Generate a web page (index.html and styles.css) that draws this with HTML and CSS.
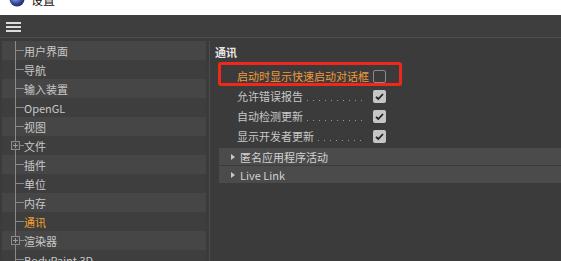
FILE: index.html
```html
<!DOCTYPE html>
<html lang="zh">

<head>
    <meta charset="UTF-8">
    <meta name="viewport" content="width=device-width, initial-scale=1.0">
    <title>设置</title>
    <link rel="stylesheet" href="styles.css">
</head>

<body>
    <div class="titlebar">
        <div class="title-inner">
            <svg class="app-icon" width="16" height="16" viewBox="0 0 16 16">
                <defs>
                    <radialGradient id="ball" cx="0.4" cy="0.35" r="0.7">
                        <stop offset="0" stop-color="#b8c8f0" />
                        <stop offset="0.6" stop-color="#3c50a8" />
                        <stop offset="1" stop-color="#1a2050" />
                    </radialGradient>
                </defs>
                <circle cx="8" cy="8" r="7.5" fill="url(#ball)" />
            </svg>
            <span class="title-text">设置</span>
        </div>
    </div>

    <div class="toolbar">
        <div class="menu-btn"><span></span><span></span><span></span></div>
    </div>

    <div class="main">
        <ul class="tree">
            <li class="tree-row"><span class="branch"></span>用户界面</li>
            <li class="tree-row"><span class="branch"></span>导航</li>
            <li class="tree-row"><span class="branch"></span>输入装置</li>
            <li class="tree-row"><span class="branch"></span>OpenGL</li>
            <li class="tree-row"><span class="branch"></span>视图</li>
            <li class="tree-row"><span class="branch"><span class="toggle"></span></span>文件</li>
            <li class="tree-row"><span class="branch"></span>插件</li>
            <li class="tree-row"><span class="branch"></span>单位</li>
            <li class="tree-row"><span class="branch"></span>内存</li>
            <li class="tree-row active"><span class="branch"></span>通讯</li>
            <li class="tree-row"><span class="branch"><span class="toggle"></span></span>渲染器</li>
            <li class="tree-row"><span class="branch"></span>BodyPaint 3D</li>
        </ul>

        <div class="content">
            <div class="group-title">通讯</div>

            <div class="options">
                <div class="highlight-box"></div>
                <div class="option orange">
                    <span class="label">启动时显示快速启动对话框</span>
                    <span class="check"></span>
                </div>
                <div class="option">
                    <span class="label">允许错误报告</span>
                    <span class="dots"></span>
                    <span class="check on"><svg width="13" height="13" viewBox="0 0 13 13"><path d="M3 6.8 L5.3 9 L10 4" fill="none" stroke="#222" stroke-width="1.8" /></svg></span>
                </div>
                <div class="option">
                    <span class="label">自动检测更新</span>
                    <span class="dots"></span>
                    <span class="check on"><svg width="13" height="13" viewBox="0 0 13 13"><path d="M3 6.8 L5.3 9 L10 4" fill="none" stroke="#222" stroke-width="1.8" /></svg></span>
                </div>
                <div class="option">
                    <span class="label">显示开发者更新</span>
                    <span class="dots"></span>
                    <span class="check on"><svg width="13" height="13" viewBox="0 0 13 13"><path d="M3 6.8 L5.3 9 L10 4" fill="none" stroke="#222" stroke-width="1.8" /></svg></span>
                </div>
            </div>

            <div class="section"><span class="arrow"></span>匿名应用程序活动</div>
            <div class="section"><span class="arrow"></span>Live Link</div>
        </div>
    </div>
</body>

</html>
```

FILE: styles.css
```css
body {
    margin: 0;
    width: 561px;
    height: 261px;
    overflow: hidden;
    background-color: #3b3b3b;
    font-family: "Noto Sans CJK SC", "Noto Sans", sans-serif;
    font-size: 11px;
    color: #c8c8c8;
}

.titlebar {
    height: 15px;
    background-color: #ffffff;
    overflow: hidden;
}

.title-inner {
    display: flex;
    align-items: center;
    height: 20px;
    margin-top: -11px;
    padding-left: 9px;
}

.title-text {
    margin-left: 6px;
    font-size: 12px;
    color: #111;
}

.toolbar {
    height: 22px;
    background-color: #3e3e3e;
    border-bottom: 1px solid #4c4c4c;
    display: flex;
    align-items: center;
    padding-left: 6px;
}

.menu-btn {
    display: flex;
    flex-direction: column;
    gap: 2px;
    margin-top: 1px;
}

.menu-btn span {
    display: block;
    width: 15px;
    height: 2px;
    background-color: #dcdcdc;
}

.main {
    display: flex;
    padding-top: 3px;
    height: 220px;
}

/* left tree */
.tree {
    list-style: none;
    margin: 0 0 0 2px;
    padding: 0;
    width: 204px;
    flex-shrink: 0;
    border-right: 3px solid #3b3b3b;
    box-shadow: 1px 0 0 #4c4c4c;
}

.tree-row {
    display: flex;
    align-items: center;
    height: 19px;
    background-color: #3e3e3e;
    white-space: nowrap;
}

.tree-row:nth-child(odd) {
    background-color: #464646;
}

.tree-row.active {
    color: #f0a030;
}

.branch {
    width: 22px;
    height: 19px;
    flex-shrink: 0;
    display: flex;
    align-items: center;
    background:
        linear-gradient(#8a8a8a, #8a8a8a) 13px 0 / 1px 100% no-repeat,
        linear-gradient(#8a8a8a, #8a8a8a) 13px 9px / 9px 1px no-repeat;
}

.toggle {
    width: 7px;
    height: 7px;
    margin-left: 9px;
    border: 1px solid #8a8a8a;
    background:
        linear-gradient(#9a9a9a, #9a9a9a) 1px 3px / 5px 1px no-repeat,
        linear-gradient(#9a9a9a, #9a9a9a) 3px 1px / 1px 5px no-repeat,
        #464646;
}

/* right panel */
.content {
    flex: 1;
    padding-left: 6px;
}

.group-title {
    height: 20px;
    line-height: 20px;
    margin-top: 1px;
    font-weight: bold;
    color: #e6e6e6;
}

.options {
    position: relative;
    margin-top: 4px;
    width: 149px;
    padding-left: 22px;
}

.highlight-box {
    position: absolute;
    left: 3px;
    top: -4px;
    width: 178px;
    height: 18px;
    border: 3px solid #f0281c;
    border-radius: 3px;
}

.option {
    display: flex;
    align-items: center;
    height: 20px;
}

.option.orange {
    color: #ef9a3a;
}

.label {
    white-space: nowrap;
}

.dots {
    flex: 1;
    height: 9px;
    margin: 0 9px 0 3px;
    background-image: linear-gradient(to right, #9a9a9a 1px, transparent 1px);
    background-size: 6px 1px;
    background-repeat: repeat-x;
    background-position: 1px bottom;
}

.check {
    width: 11px;
    height: 11px;
    margin-left: auto;
    border: 1px solid #8a8a8a;
    border-radius: 2px;
    flex-shrink: 0;
}

.check.on {
    width: 13px;
    height: 13px;
    border: none;
    background-color: #c6c6c6;
}

.check svg {
    display: block;
}

.section {
    display: flex;
    align-items: center;
    height: 17px;
    margin-left: 4px;
    margin-top: 2px;
    background-color: #4b4b4b;
    color: #d2d2d2;
}

.section + .section {
    margin-top: 1px;
}

.arrow {
    width: 0;
    height: 0;
    margin: 0 5px 0 12px;
    border-left: 4px solid #c8c8c8;
    border-top: 3px solid transparent;
    border-bottom: 3px solid transparent;
}
```
